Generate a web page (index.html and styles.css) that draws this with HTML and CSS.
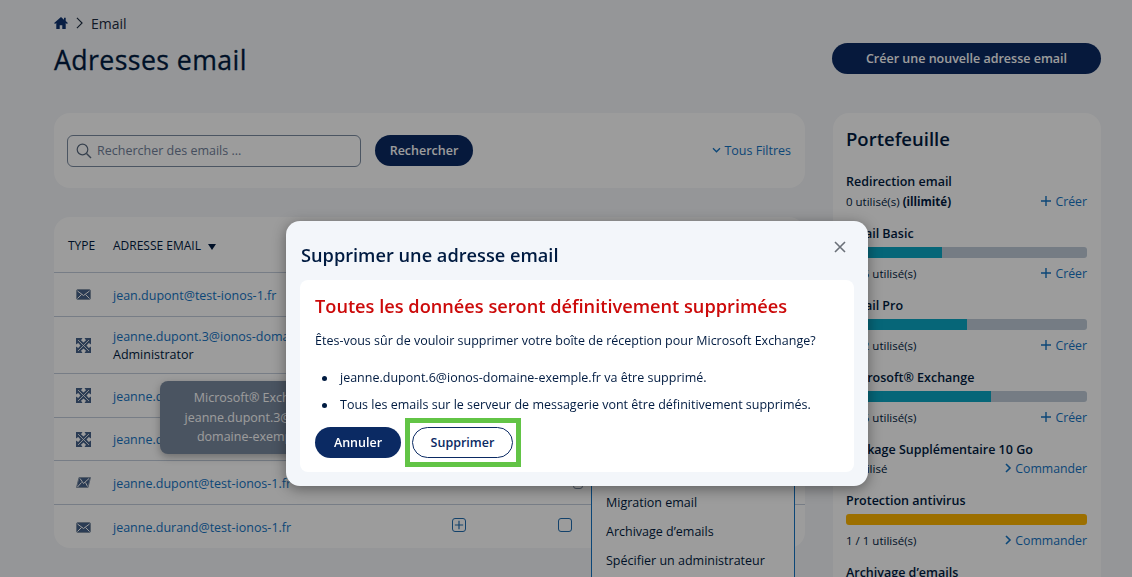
FILE: index.html
```html
<!DOCTYPE html>
<html lang="fr">
<head>
    <meta charset="UTF-8">
    <meta name="viewport" content="width=device-width, initial-scale=1.0">
    <title>Adresses email</title>
    <link rel="stylesheet" href="styles.css">
</head>
<body>
    <svg class="sprites" width="0" height="0">
        <symbol id="mail" viewBox="0 0 15 11"><rect x=".5" y=".5" width="14" height="10" rx="1.500" fill="#47628a" stroke="#8a98ab"/><path d="M1.500 2 7.500 6.500 13.500 2M1.500 9.500 5.500 5.500M13.500 9.500 9.500 5.500" fill="none" stroke="#fff" stroke-width="1"/></symbol>
        <symbol id="mail-open" viewBox="0 0 15 11"><path d="M3 .5h11.500L12 10.500H.5z" fill="#47628a" stroke="#8a98ab"/><path d="M4 1.500 7.500 6.500 13 1.500M1.500 10 5.500 5.500M11.500 9.500 9.500 5.500" fill="none" stroke="#fff" stroke-width="1"/></symbol>
        <symbol id="exchange" viewBox="0 0 15 15"><path d="M0 0h6.500L5 2.200 7.500 4.500 10 2.200 8.500 0H15v6.500L12.800 5 10.500 7.500 12.800 10 15 8.500V15H8.500L10 12.800 7.500 10.500 5 12.800 6.500 15H0V8.500L2.200 10 4.500 7.500 2.200 5 0 6.500z" fill="#47628a"/><path d="M2 2 13 13M13 2 2 13" stroke="#fff" stroke-width=".8"/></symbol>
        <symbol id="plus" viewBox="0 0 12 12"><path d="M6 1v10M1 6h10" fill="none" stroke="currentColor" stroke-width="1.400"/></symbol>
        <symbol id="chev" viewBox="0 0 8 12"><path d="M2 2l4 4-4 4" fill="none" stroke="currentColor" stroke-width="1.600"/></symbol>
    </svg>

    <div class="page">
        <main class="content">
            <nav class="crumbs">
                <svg class="home" viewBox="0 0 16 14" width="14" height="12"><path d="M8 0 0 7l1 1.200L2.500 7v7h4V9.500h3V14h4V7L15 8.200 16 7l-2.500-2.200V1h-2v2.100z" fill="#0f3370"/></svg>
                <svg class="crumb-sep" viewBox="0 0 8 14" width="7" height="12"><path d="M1 1l6 6-6 6" fill="none" stroke="#1c2b40" stroke-width="1.300"/></svg>
                <span>Email</span>
            </nav>
            <div class="title-row">
                <h1>Adresses email</h1>
                <a class="btn btn-primary btn-new">Créer une nouvelle adresse email</a>
            </div>

            <div class="columns">
                <div class="left">
                    <section class="card search-card">
                        <label class="search">
                            <svg viewBox="0 0 16 16" width="16" height="16"><circle cx="6.500" cy="6.500" r="5.300" fill="none" stroke="#5a6b80" stroke-width="1.200"/><path d="M10.500 10.500 15 15" stroke="#5a6b80" stroke-width="1.400"/></svg>
                            <span>Rechercher des emails ...</span>
                        </label>
                        <a class="btn btn-primary btn-search">Rechercher</a>
                        <a class="filters"><svg viewBox="0 0 10 8" width="9" height="7"><path d="M1 1.500l4 4 4-4" fill="none" stroke="currentColor" stroke-width="1.500"/></svg>Tous Filtres</a>
                    </section>

                    <section class="card table-card">
                        <div class="row row-head">
                            <span class="col-type">TYPE</span>
                            <span class="col-mail">ADRESSE EMAIL <i class="sort"></i></span>
                        </div>
                        <div class="row">
                            <svg class="ico" width="15" height="11"><use href="#mail"/></svg>
                            <a class="col-mail">jean.dupont@test-ionos-1.fr</a>
                        </div>
                        <div class="row row-l">
                            <svg class="ico" width="15" height="15"><use href="#exchange"/></svg>
                            <div class="col-mail"><a>jeanne.dupont.3@ionos-domaine-exemple.fr</a><br>Administrator</div>
                        </div>
                        <div class="row">
                            <svg class="ico" width="15" height="15"><use href="#exchange"/></svg>
                            <a class="col-mail">jeanne.dupont.6@ionos-domaine-exemple.fr</a>
                        </div>
                        <div class="row row-m">
                            <svg class="ico" width="15" height="15"><use href="#exchange"/></svg>
                            <a class="col-mail">jeanne.dupont.7@ionos-domaine-exemple.fr</a>
                        </div>
                        <div class="row">
                            <svg class="ico" width="15" height="11"><use href="#mail-open"/></svg>
                            <a class="col-mail">jeanne.dupont@test-ionos-1.fr</a>
                            <i class="box box-peek"></i>
                        </div>
                        <div class="row row-end">
                            <svg class="ico" width="15" height="11"><use href="#mail"/></svg>
                            <a class="col-mail">jeanne.durand@test-ionos-1.fr</a>
                            <i class="box box-plus"><svg width="10" height="10"><use href="#plus"/></svg></i>
                            <i class="box box-check"></i>
                        </div>

                        <div class="tooltip">Microsoft® Exchange<br>jeanne.dupont.3@ionos-<br>domaine-exemple.fr</div>
                        <ul class="menu">
                            <li>Migration email</li>
                            <li>Archivage d’emails</li>
                            <li>Spécifier un administrateur</li>
                        </ul>
                    </section>
                </div>

                <aside class="card wallet">
                    <h2>Portefeuille</h2>
                    <div class="item">
                        <h3>Redirection email</h3>
                        <div class="item-foot"><span>0 utilisé(s) <b>(illimité)</b></span><a><svg width="12" height="12"><use href="#plus"/></svg>Créer</a></div>
                    </div>
                    <div class="item">
                        <h3>Email Basic</h3>
                        <div class="bar"><div class="fill" style="width: 40%"></div></div>
                        <div class="item-foot"><span>2 / 5 utilisé(s)</span><a><svg width="12" height="12"><use href="#plus"/></svg>Créer</a></div>
                    </div>
                    <div class="item">
                        <h3>Email Pro</h3>
                        <div class="bar"><div class="fill" style="width: 50%"></div></div>
                        <div class="item-foot"><span>1 / 2 utilisé(s)</span><a><svg width="12" height="12"><use href="#plus"/></svg>Créer</a></div>
                    </div>
                    <div class="item">
                        <h3>Microsoft® Exchange</h3>
                        <div class="bar"><div class="fill" style="width: 60%"></div></div>
                        <div class="item-foot"><span>3 / 5 utilisé(s)</span><a><svg width="12" height="12"><use href="#plus"/></svg>Créer</a></div>
                    </div>
                    <div class="item item-tight">
                        <h3>Package Supplémentaire 10 Go</h3>
                        <div class="item-foot"><span>0 utilisé</span><a><svg width="8" height="12"><use href="#chev"/></svg>Commander</a></div>
                    </div>
                    <div class="item">
                        <h3>Protection antivirus</h3>
                        <div class="bar"><div class="fill fill-full" style="width: 100%"></div></div>
                        <div class="item-foot"><span>1 / 1 utilisé(s)</span><a><svg width="8" height="12"><use href="#chev"/></svg>Commander</a></div>
                    </div>
                    <div class="item">
                        <h3>Archivage d’emails</h3>
                    </div>
                </aside>
            </div>
        </main>
    </div>

    <div class="overlay"></div>

    <div class="modal">
        <div class="modal-head">
            <h2>Supprimer une adresse email</h2>
            <svg class="close" viewBox="0 0 12 12" width="12" height="12"><path d="M1 1l10 10M11 1 1 11" stroke="#6a7078" stroke-width="1.600"/></svg>
        </div>
        <div class="modal-body">
            <h3>Toutes les données seront définitivement supprimées</h3>
            <p>Êtes-vous sûr de vouloir supprimer votre boîte de réception pour Microsoft Exchange?</p>
            <ul>
                <li>jeanne.dupont.6@ionos-domaine-exemple.fr va être supprimé.</li>
                <li>Tous les emails sur le serveur de messagerie vont être définitivement supprimés.</li>
            </ul>
            <div class="modal-actions">
                <a class="btn btn-cancel">Annuler</a>
                <a class="btn btn-delete">Supprimer</a>
            </div>
        </div>
    </div>
</body>
</html>
```

FILE: styles.css
```css
*{
    margin: 0;
    padding: 0;
    box-sizing: border-box;
}
html,body{
    height: 577px;
    overflow: hidden;
}
body{
    font-family: "Open Sans", "Liberation Sans", sans-serif;
    font-size: 12.500px;
    color: #001b41;
    background: #f4f6f9;
}
.sprites{
    position: absolute;
}
a{
    color: #1474c4;
}
.page{
    height: 577px;
    overflow: hidden;
}
.content{
    padding: 14px 31px 0 54px;
}
.crumbs{
    display: flex;
    align-items: center;
    gap: 8px;
    height: 18px;
    color: #1c2b40;
    font-size: 14px;
}
.title-row{
    display: flex;
    justify-content: space-between;
    align-items: center;
    height: 40px;
    margin-top: 6px;
}
.title-row h1{
    padding-top: 3px;
    font-size: 26.700px;
    font-weight: 400;
    letter-spacing: .4px;
    -webkit-text-stroke: .3px #001b41;
    color: #001b41;
}
.btn{
    display: inline-flex;
    justify-content: center;
    align-items: center;
    border-radius: 16px;
    font-weight: 600;
}
.btn-primary{
    background: #0b2a63;
    color: #fff;
}
.btn-new{
    width: 269px;
    height: 31px;
}
.columns{
    display: flex;
    gap: 28px;
    margin-top: 35px;
}
.left{
    width: 751px;
    flex: none;
}
.card{
    background: #fff;
    border-radius: 16px;
}
.search-card{
    display: flex;
    align-items: center;
    height: 75px;
    padding: 0 14px 0 13px;
}
.search{
    display: flex;
    align-items: center;
    gap: 5px;
    width: 294px;
    height: 32px;
    padding-left: 8px;
    border: 1px solid #7b8ba0;
    border-radius: 6px;
    color: #71809a;
}
.btn-search{
    width: 98px;
    height: 31px;
    margin-left: 14px;
}
.filters{
    display: flex;
    align-items: center;
    gap: 3px;
    margin-left: auto;
}
.table-card{
    position: relative;
    margin-top: 29px;
    height: 331px;
}
.row{
    display: flex;
    align-items: center;
    height: 44px;
    padding: 2px 0 0 14px;
    border-bottom: 1px solid #c3cddb;
}
.row-head{
    height: 56px;
    font-size: 12px;
    color: #001b41;
}
.row-l{
    height: 57px;
}
.row-m{
    height: 43px;
}
.row-end{
    border-bottom: 0;
}
.col-type{
    width: 45px;
}
.col-mail{
    white-space: nowrap;
    line-height: 18px;
}
.ico{
    flex: none;
    margin: -2px 22px 0 8px;
}
.sort{
    display: inline-block;
    margin-left: 4px;
    border: 4px solid transparent;
    border-top: 6px solid #001b41;
    border-bottom: 0;
}
.box{
    display: flex;
    justify-content: center;
    align-items: center;
    position: absolute;
    width: 14px;
    height: 14px;
    border: 1.500px solid #1f6cb0;
    border-radius: 3px;
    color: #1f6cb0;
}
.box-plus{
    left: 398px;
    top: 301px;
}
.box-check{
    left: 504px;
    top: 301px;
}
.box-peek{
    left: 519px;
    top: 258px;
    width: 10px;
    border-color: #7b8ba0;
}
.tooltip{
    position: absolute;
    left: 106px;
    top: 164px;
    width: 192px;
    padding: 7px 0;
    background: #7a8a9f;
    border-radius: 8px;
    box-shadow: 0 3px 8px rgba(0,0,0,.3);
    color: #fff;
    text-align: center;
    line-height: 19.500px;
}
.menu{
    position: absolute;
    left: 537px;
    top: 240px;
    width: 204px;
    height: 200px;
    padding-top: 36px;
    background: #fff;
    border: 1px solid #1474c4;
    list-style: none;
}
.menu li{
    height: 29px;
    padding-left: 14px;
    line-height: 18px;
}
.wallet{
    flex: 1;
    height: 520px;
    padding: 13px 14px 0 13px;
}
.wallet h2{
    font-size: 18.500px;
    font-weight: 600;
    line-height: 26px;
    margin-bottom: 19px;
}
.item{
    margin-bottom: 12px;
}
.item h3{
    height: 20px;
    font-size: 12.500px;
    font-weight: 600;
    line-height: 22px;
}
.item-tight h3{
    height: 19px;
    line-height: 21px;
}
.bar{
    height: 11px;
    margin: 4px 0 5px;
    background: #bfcbd8;
    border-radius: 3px;
    overflow: hidden;
}
.fill{
    height: 100%;
    background: #0aa7c4;
}
.fill-full{
    background: #ffb600;
}
.item-foot{
    display: flex;
    justify-content: space-between;
    align-items: center;
    height: 20px;
    font-size: 11.500px;
}
.item-foot a{
    display: flex;
    align-items: center;
    gap: 3px;
    font-size: 12.300px;
}
.overlay{
    position: fixed;
    inset: 0;
    background: rgba(0,0,0,.39);
}
.modal{
    position: absolute;
    left: 286px;
    top: 221px;
    width: 582px;
    height: 265px;
    padding: 0 14px;
    background: #f3f6fa;
    border-radius: 14px;
    box-shadow: 0 3px 14px rgba(0,0,0,.4);
}
.modal-head{
    display: flex;
    justify-content: space-between;
    align-items: center;
    height: 59px;
    padding: 9px 8px 0 1px;
}
.modal-head h2{
    font-size: 18.200px;
    font-weight: 600;
    color: #001b41;
}
.close{
    margin-top: -17px;
}
.modal-body{
    height: 192px;
    padding: 13px 15px;
    background: #fff;
    border-radius: 8px;
}
.modal-body h3{
    font-size: 18.200px;
    font-weight: 600;
    line-height: 26px;
    color: #cc0a0a;
}
.modal-body p{
    margin-top: 13px;
    line-height: 18px;
}
.modal-body ul{
    margin-top: 19px;
    padding-left: 7px;
    list-style: none;
}
.modal-body li{
    display: flex;
    align-items: center;
    gap: 13px;
    height: 27px;
    padding-bottom: 9px;
    line-height: 18px;
}
.modal-body li::before{
    content: '';
    flex: none;
    width: 5px;
    height: 5px;
    border-radius: 50%;
    background: #001b41;
}
.modal-actions{
    display: flex;
    gap: 11px;
    margin-top: 4px;
}
.btn-cancel{
    width: 86px;
    height: 31px;
    background: #0b2a63;
    color: #fff;
}
.btn-delete{
    position: relative;
    width: 101px;
    height: 31px;
    background: #fff;
    border: 1px solid #0b2a63;
    color: #0b2a63;
}
.btn-delete::after{
    content: '';
    position: absolute;
    inset: -10px -9px -10px -8px;
    border: 5px solid #62c446;
}
```
